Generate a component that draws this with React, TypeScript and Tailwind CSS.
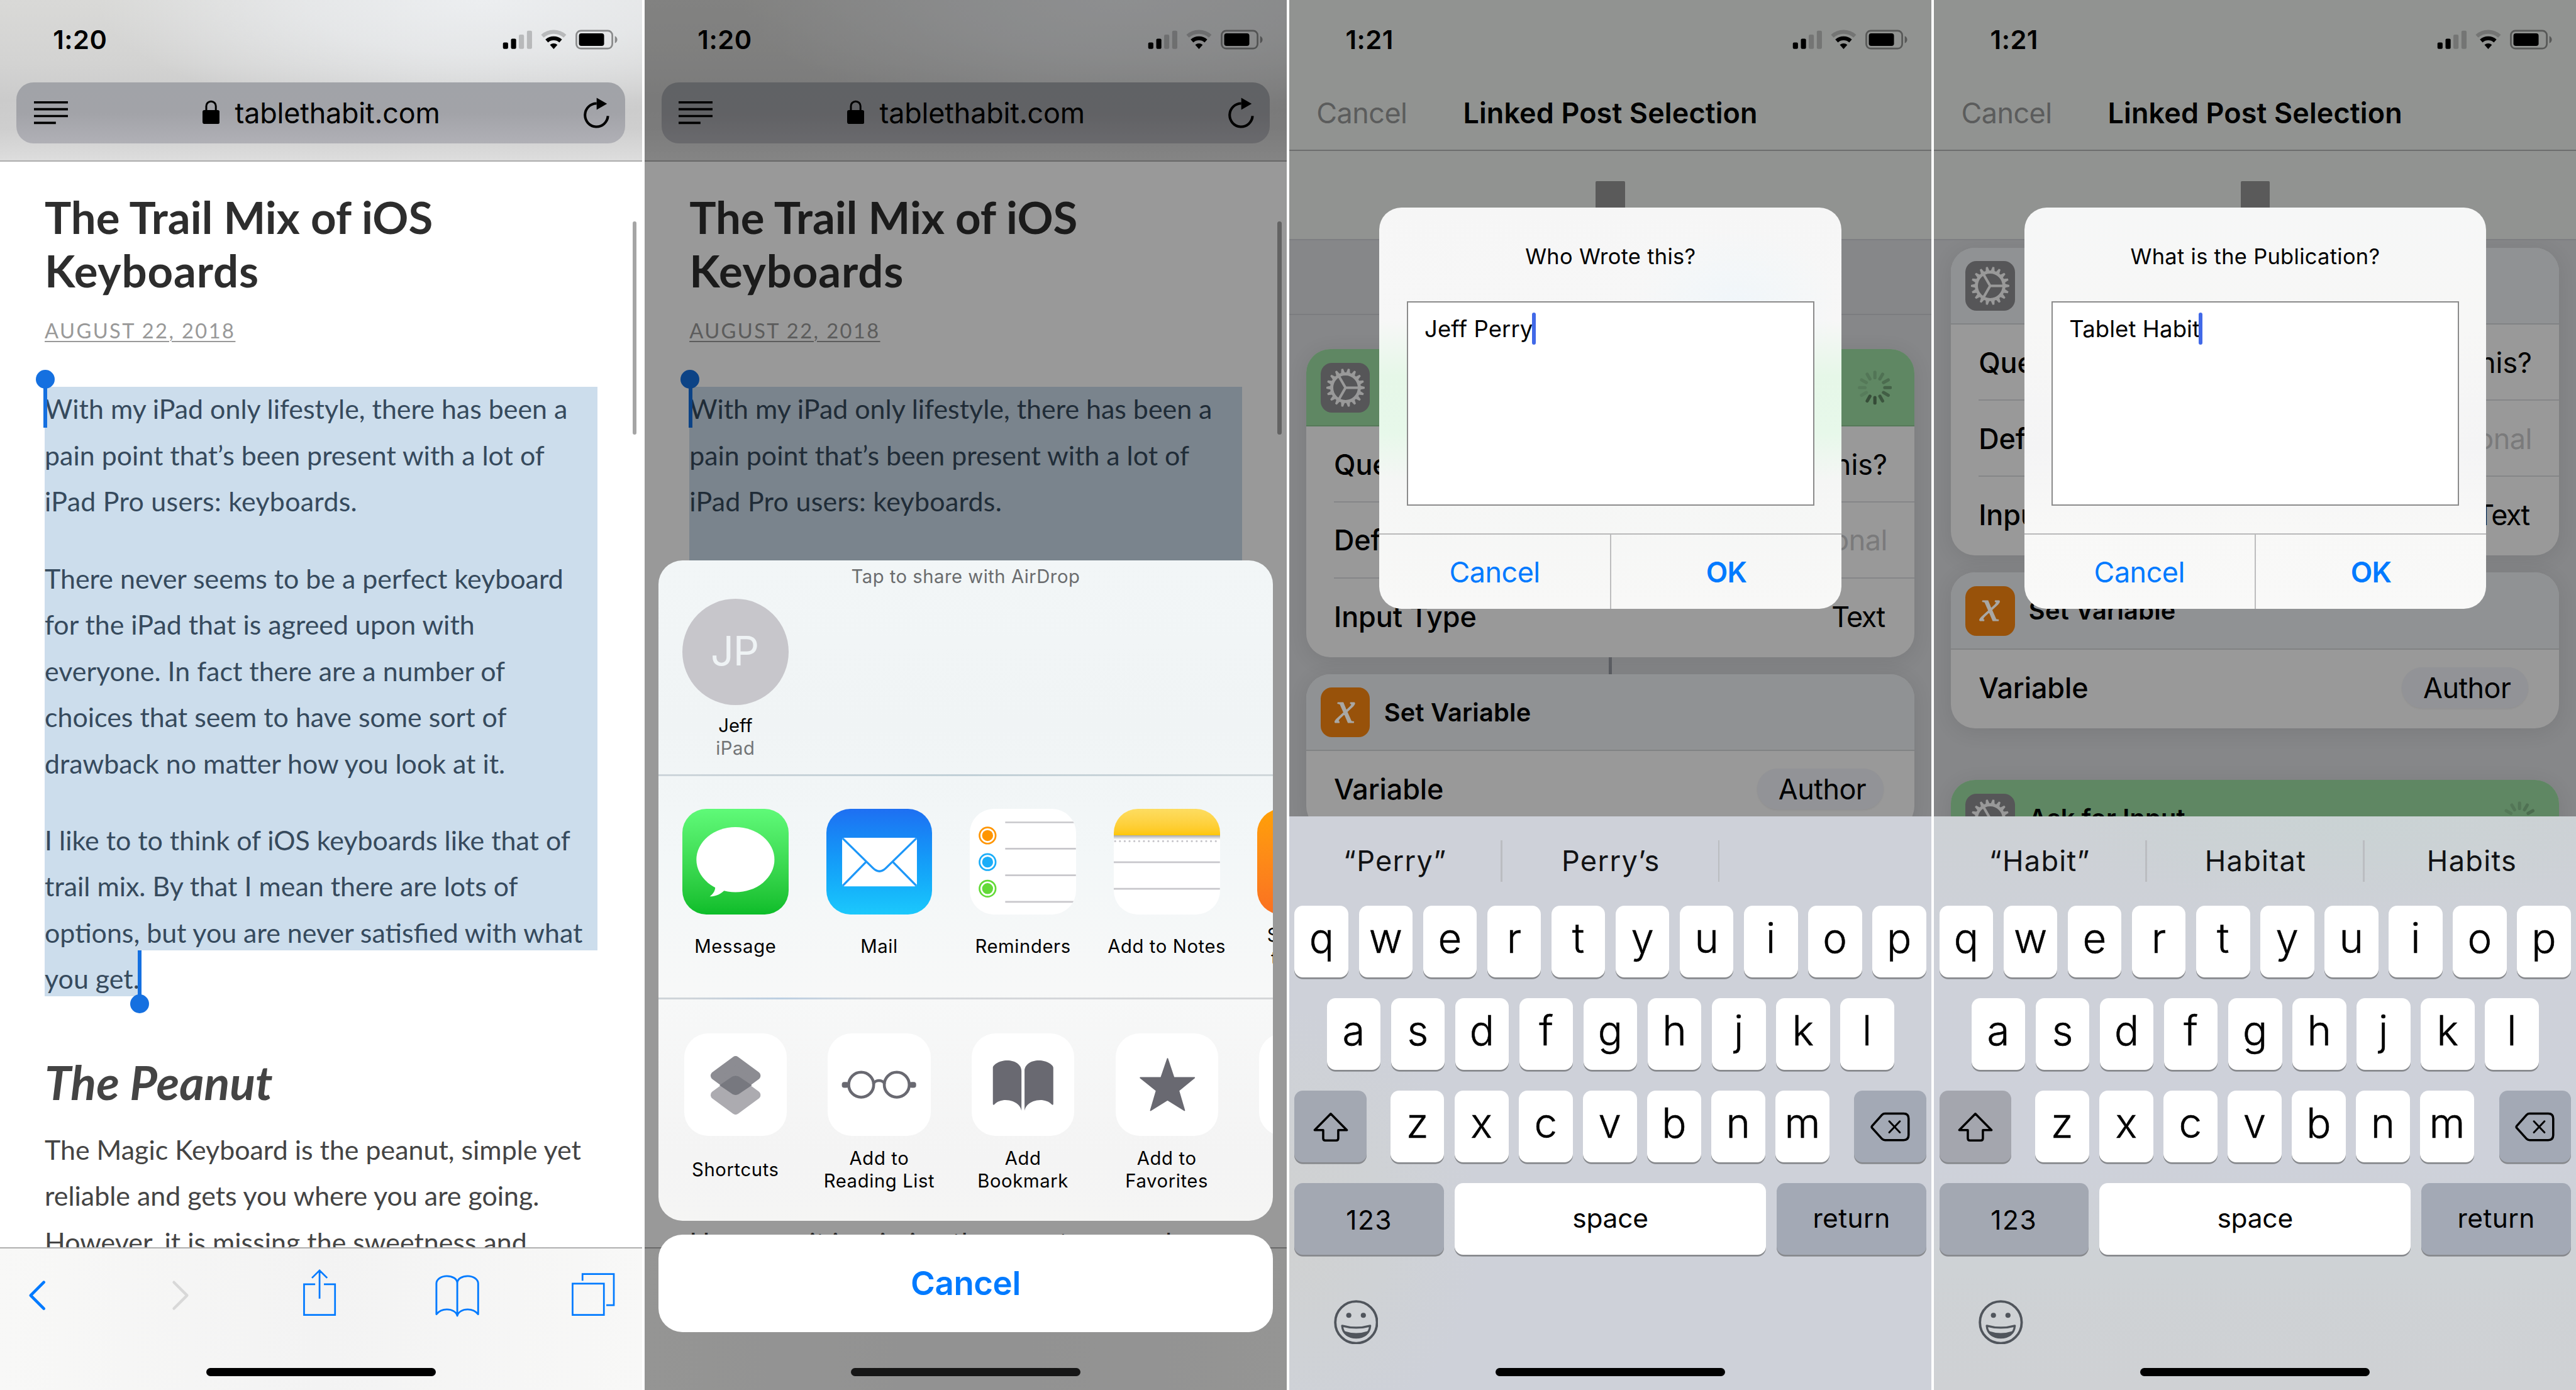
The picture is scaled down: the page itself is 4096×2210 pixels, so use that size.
import type { ReactNode } from "react";

/* Lengths are iOS points; the root zoom turns four 375pt screens into the full window width. */

const ARTICLE: string[][] = [
  [
    "With my iPad only lifestyle, there has been a",
    "pain point that’s been present with a lot of",
    "iPad Pro users: keyboards.",
  ],
  [
    "There never seems to be a perfect keyboard",
    "for the iPad that is agreed upon with",
    "everyone. In fact there are a number of",
    "choices that seem to have some sort of",
    "drawback no matter how you look at it.",
  ],
  [
    "I like to to think of iOS keyboards like that of",
    "trail mix. By that I mean there are lots of",
    "options, but you are never satisfied with what",
    "you get.",
  ],
];

const PEANUT = [
  "The Magic Keyboard is the peanut, simple yet",
  "reliable and gets you where you are going.",
  "However, it is missing the sweetness and",
];

function StatusBar({ time }: { time: string }) {
  return (
    <div className="flex h-11 shrink-0 items-start justify-between pt-[14px] text-black">
      <div className="w-[93.6px] text-center text-[15.3px] font-semibold leading-[18.4px] tracking-[0.012em]">{time}</div>
      <svg className="mr-[13px] mt-[2px] h-[14px] w-[69px]" viewBox="293 16 69 14" fill="none">
        <rect x="294" y="24.6" width="3" height="3.8" rx="0.8" fill="#000" />
        <rect x="298.7" y="22.4" width="3" height="6" rx="0.8" fill="#000" />
        <rect x="303.3" y="20" width="3" height="8.4" rx="0.8" fill="#000" fillOpacity="0.2" />
        <rect x="308" y="17.7" width="3" height="10.7" rx="0.8" fill="#000" fillOpacity="0.2" />
        <path d="M317.05 20.98A9.85 9.85 0 0 1 330.25 20.98" stroke="#000" strokeOpacity="0.2" strokeWidth="2.3" />
        <path d="M319.57 23.77A6.1 6.1 0 0 1 327.73 23.77" stroke="#000" strokeWidth="2.3" />
        <path d="M323.65 28.5L321.45 26Q323.65 24.4 325.85 26Z" fill="#000" />
        <rect x="336.9" y="17.8" width="21" height="10.4" rx="2.6" stroke="#000" strokeOpacity="0.4" strokeWidth="1" />
        <rect x="338.4" y="19.3" width="14.7" height="7.4" rx="1.4" fill="#000" />
        <path d="M359.4 20.9C361.3 21.7 361.3 24.3 359.4 25.1Z" fill="#000" fillOpacity="0.4" />
      </svg>
    </div>
  );
}

function HomeIndicator({ color }: { color: string }) {
  return <div className={`absolute bottom-2 left-[120.5px] h-[5px] w-[134px] rounded-full ${color}`} />;
}

function Phone({ children, className = "" }: { children: ReactNode; className?: string }) {
  return (
    <section className={`relative flex h-full w-[375px] shrink-0 flex-col overflow-hidden ${className}`}>{children}</section>
  );
}

/* ---------- Safari ---------- */

function AddressBar() {
  return (
    <div className="mx-[9.7px] mt-[4px] flex h-[35.8px] items-center justify-between rounded-[10px] bg-linear-to-b from-[#a1a3a8] via-[#a2a3a8] to-[#b0b0b6] pl-[10.1px] pr-[9.2px]">
      <svg className="h-[14px] w-[20px]" viewBox="0 0 20 14" stroke="#000" strokeWidth="1.35">
        <path d="M0 1H20M0 5H20M0 9H20M0 13H12.8" />
      </svg>
      <div className="flex items-center pr-[5.6px]">
        <svg className="mb-px h-[14px] w-[10px]" viewBox="0 0 10 14">
          <path d="M2.2 6V3.6A2.8 2.8 0 0 1 7.8 3.6V6" fill="none" stroke="#000" strokeWidth="1.1" />
          <rect x="0" y="5.9" width="10" height="8.1" rx="1.1" />
        </svg>
        <span className="ml-[9px] pt-[0.8px] text-[16.5px] leading-5 tracking-[-0.004em]">tablethabit.com</span>
      </div>
      <svg className="h-[18px] w-[15px]" viewBox="341.1 57 15 18">
        <path d="M355.3 67.8A6.7 6.8 0 1 1 348.7 60.5" fill="none" stroke="#000" strokeWidth="1.5" />
        <path d="M348.7 57.2L354.8 60.7L348.7 64.2Z" />
      </svg>
    </div>
  );
}

function Lines({ lines }: { lines: string[] }) {
  return (
    <p className="text-[15.77px] leading-[27px] whitespace-nowrap">
      {lines.map((line) => (
        <span key={line} className="block">
          {line}
        </span>
      ))}
    </p>
  );
}

function SafariPage() {
  return (
    <>
      <header className="h-[94.3px] shrink-0 border-b border-[#acacac] bg-[radial-gradient(60%_75%_at_75%_0%,#eceef0_0%,#e9ebedcc_45%,transparent_100%),linear-gradient(to_bottom,#d9d9d7_0%,#d3d3d2_40%,#cbcbcb_62%,#cecece_80%,#dddddd_100%)]">
        <StatusBar time="1:20" />
        <AddressBar />
      </header>
      <main className="relative flex-1 overflow-hidden bg-white pl-[26.1px] font-['Lato',sans-serif] text-[#444444]">
        <h1 className="mt-[17.1px] text-[26px] font-bold leading-[31px] text-[#2d2d2d]">
          The Trail Mix of iOS
          <br />
          <span className="tracking-[0.012em]">Keyboards</span>
        </h1>
        <div className="mt-[10.9px] text-[12px] leading-[18px] tracking-[0.074em] text-[#999999]">
          <span className="underline decoration-[0.9px] underline-offset-[1.6px]">AUGUST 22, 2018</span>
        </div>
        <div className="relative mt-[23px] flex flex-col gap-[18px] text-[#364a5d]">
          <div className="absolute left-0 top-[0.6px] h-[329.2px] w-[322.8px] bg-[#ccddec]" />
          <div className="absolute left-0 top-[329.7px] h-[27px] w-[54.6px] bg-[#ccddec]" />
          {ARTICLE.map((lines, i) => (
            <div key={lines[0]} className={i === 0 ? "relative [&_span:last-child]:tracking-[0.0065em]" : "relative"}>
              <Lines lines={lines} />
            </div>
          ))}
          <div className="absolute -left-[0.6px] top-[0.4px] h-[24.2px] w-[2.2px] bg-[#1570e0]" />
          <div className="absolute -left-[5.1px] -top-[9.3px] size-[11px] rounded-full bg-[#1570e0]" />
          <div className="absolute left-[54.5px] top-[329.8px] h-[28px] w-[2.2px] bg-[#1570e0]" />
          <div className="absolute left-[50.1px] top-[355.6px] size-[11px] rounded-full bg-[#1570e0]" />
        </div>
        <h2 className="mt-[29.7px] text-[27.7px] font-bold italic leading-[34px]">The Peanut</h2>
        <div className="mt-[9px]">
          <Lines lines={PEANUT} />
        </div>
        <div className="absolute right-[3px] top-[35px] h-[124.7px] w-[2.5px] rounded-full bg-[#a5a5a5]" />
      </main>
      <footer className="flex h-[83.4px] shrink-0 border-t border-[#b0b0b0] bg-linear-to-r from-[#f8f8f7] via-[#f3f3f3] to-[#f8f8f7] pt-[10.9px]">
        <svg className="ml-[7.6px] h-[30px] w-[28px]" viewBox="7.6 740 28 30" fill="none" stroke="#007aff" strokeWidth="1.7" strokeLinecap="round" strokeLinejoin="round">
          <path d="M25.5 748.7L17.8 756.4L25.5 764.1" />
        </svg>
        <svg className="ml-[56px] h-[30px] w-[28px]" viewBox="91.6 740 28 30" fill="none" stroke="#d8d8d8" strokeWidth="1.6" strokeLinecap="round" strokeLinejoin="round">
          <path d="M101.7 748.7L109.4 756.4L101.7 764.1" />
        </svg>
        <svg className="ml-[53.2px] h-[30px] w-[28px]" viewBox="172.85 740 28 30" fill="none" stroke="#007aff" strokeWidth="1">
          <path d="M184.3 749.9H177.8V767.8H195.9V749.9H189.4M186.85 742V758.3M182.4 746.2L186.85 741.8L191.3 746.2" />
        </svg>
        <svg className="ml-[52.2px] h-[30px] w-[28px]" viewBox="253 740 28 30" fill="none" stroke="#007aff" strokeWidth="1.05" strokeLinejoin="round">
          <path d="M267 749.2C267 746.6 264 745.1 260.9 745.1C257.7 745.1 254.8 747 254.8 749.4V767.4C256.3 765.6 258.5 764.6 260.9 764.6C264 764.6 266.4 766 267 768.3C267.6 766 270 764.6 273.1 764.6C275.5 764.6 277.7 765.6 279.2 767.4V749.4C279.2 747 276.3 745.1 273.1 745.1C270 745.1 267 746.6 267 749.2ZM267 749V768" />
        </svg>
        <svg className="ml-[51.5px] h-[30px] w-[28px]" viewBox="332.5 740 28 30" fill="none" stroke="#007aff" strokeWidth="1">
          <path d="M334.5 749.5H352.8V767.8H334.5ZM340.3 747.8V743.9H358.6V762.1H354.2" />
        </svg>
      </footer>
    </>
  );
}

/* ---------- Share sheet ---------- */

function SheetItem({ label, children }: { label: string; children: ReactNode }) {
  return (
    <div className="flex w-[84px] shrink-0 flex-col items-center">
      {children}
      <div className="mt-[5px] flex h-[27.6px] items-center text-center text-[10.75px] leading-[13.3px] tracking-[0.021em] whitespace-pre text-black">
        {label}
      </div>
    </div>
  );
}

function AppTile({ className, children }: { className: string; children?: ReactNode }) {
  return <div className={`size-[62px] overflow-hidden rounded-[14px] ${className}`}>{children}</div>;
}

function ActionTile({ children }: { children?: ReactNode }) {
  return (
    <div className="mb-[1.1px] size-[60px] overflow-hidden rounded-[14px] bg-white">
      <svg className="size-[60px]" viewBox="0 0 60 60">
        {children}
      </svg>
    </div>
  );
}

const REMINDERS = ["#ff9500", "#1badf8", "#63da38"];

function ShareSheet() {
  return (
    <div className="absolute inset-x-2 bottom-[34px] flex flex-col gap-2">
      <div className="flex h-[385.8px] flex-col overflow-hidden rounded-[14px] bg-[linear-gradient(to_bottom,#f2f6f7_0%,#f0f4f5_25%,#f3f7f8_45%,#f7f8f8_65%,#f4f4f4_90%,#f5f5f4_100%)]">
        <div className="flex h-[125.1px] shrink-0 flex-col">
          <div className="h-[19px] text-center text-[10.75px] leading-[19px] tracking-[0.017em] text-[#6a6c6e]">Tap to share with AirDrop</div>
          <div className="ml-[14px] mt-[3.5px] flex w-[62px] flex-col items-center text-[10.75px] leading-[13.2px]">
            <div className="mb-[5.6px] flex size-[62px] items-center justify-center rounded-full bg-[#c7c6cb] pb-px pr-[1px] text-[23.8px] tracking-[-0.02em] text-[#eff3f5]">
              JP
            </div>
            <div className="text-black">Jeff</div>
            <div className="tracking-[0.02em] text-[#727476]">iPad</div>
          </div>
        </div>
        <div className="h-[1.1px] shrink-0 bg-linear-to-r from-[#cdd5da] via-[#c1d0d7] to-[#d0d7da]" />
        <div className="flex h-[129.2px] shrink-0 pl-[3px] pt-[18.9px]">
          <SheetItem label="Message">
            <AppTile className="bg-linear-to-b from-[#5ffa78] to-[#0bbd29]">
              <svg viewBox="0 0 62 62" fill="#fff">
                <ellipse cx="31" cy="29.7" rx="22.8" ry="19" />
                <path d="M18.6 43.5C19.9 46.2 19 48.8 16 51.2C19.8 51.2 23 49.4 25.2 47Z" />
              </svg>
            </AppTile>
          </SheetItem>
          <SheetItem label="Mail">
            <AppTile className="bg-linear-to-b from-[#1e6ff2] to-[#1cc8fc]">
              <svg viewBox="0 0 62 62" fill="none" stroke="#1d97f8" strokeWidth="1.2">
                <rect x="9.2" y="16.9" width="43.7" height="28.4" rx="1.4" fill="#fff" stroke="none" />
                <path d="M9.6 17.3L27.2 34.6Q31 38.3 34.8 34.6L52.5 17.3M9.6 44.9L23 31.2M52.5 44.9L39 31.2" />
              </svg>
            </AppTile>
          </SheetItem>
          <SheetItem label="Reminders">
            <AppTile className="bg-white">
              <svg viewBox="0 0 62 62" fill="none">
                <path d="M20.7 7.9H62M20.7 23.3H62M20.7 38.8H62M20.7 54.3H62" stroke="#c8c7cc" />
                {REMINDERS.map((color, i) => (
                  <g key={color}>
                    <circle cx="10.4" cy={15.6 + i * 15.5} r="4.7" stroke={color} strokeWidth="1" />
                    <circle cx="10.4" cy={15.6 + i * 15.5} r="3.2" fill={color} />
                  </g>
                ))}
              </svg>
            </AppTile>
          </SheetItem>
          <SheetItem label="Add to Notes">
            <AppTile className="bg-white">
              <div className="h-[15.6px] bg-linear-to-b from-[#fddd60] to-[#fec702]" />
              <div className="h-[2.4px] bg-linear-to-b from-[#a9a9a9] to-white" />
              <svg className="h-[44px] w-[62px]" viewBox="0 18 62 44">
                <path d="M0.8 18.9H62" stroke="#c8c7cc" strokeWidth="1.2" strokeLinecap="round" strokeDasharray="0 2.8" />
                <path d="M0 31.2H62M0 46.7H62" stroke="#c8c7cc" />
              </svg>
            </AppTile>
          </SheetItem>
          <SheetItem label={"Save PDF\nto Books"}>
            <AppTile className="bg-linear-to-b from-[#ffa005] to-[#fa7021]" />
          </SheetItem>
        </div>
        <div className="h-[1.1px] shrink-0 bg-[linear-gradient(to_right,#cfd4d9_5%,#bccfe2_20%,#d4d7db_35%,#d4d6d8_100%)]" />
        <div className="flex flex-1 pl-[3px] pt-[19.9px]">
          <SheetItem label="Shortcuts">
            <ActionTile>
              <g strokeWidth="5" strokeLinejoin="round">
                <path d="M30 15.8L42.1 24.7L30 33.6L17.9 24.7Z" fill="#8c8c92" stroke="#8c8c92" />
                <path d="M30 27.1L42.1 36L30 44.9L17.9 36Z" fill="#acabb0" stroke="#acabb0" />
              </g>
              <path d="M20.6 30.3L28 25.3Q30 24 32 25.3L39.5 30.3L32 35.4Q30 36.7 28 35.4Z" fill="#77787f" />
            </ActionTile>
          </SheetItem>
          <SheetItem label={"Add to\nReading List"}>
            <ActionTile>
              <g fill="none" stroke="#696971" strokeWidth="1.7">
                <circle cx="19.6" cy="30" r="7.3" />
                <circle cx="40.4" cy="30" r="7.3" />
                <path d="M26.8 29.6C27.4 26.9 32.6 26.9 33.2 29.6" />
              </g>
              <rect x="8.3" y="28.4" width="4" height="3.4" rx="1.4" fill="#696971" />
              <rect x="47.7" y="28.4" width="4" height="3.4" rx="1.4" fill="#696971" />
            </ActionTile>
          </SheetItem>
          <SheetItem label={"Add\nBookmark"}>
            <ActionTile>
              <path
                d="M29.1 22C29.1 18.2 25.3 15.8 20.8 15.8C16 15.8 12.4 18.5 12.4 20V41.2C12.4 42 13 41.9 13.3 41.5C16 38.6 20.6 38.4 24 39.7C27.3 41 28.6 43 29.1 45.2ZM30.9 22C30.9 18.2 34.7 15.8 39.2 15.8C44 15.8 47.7 18.5 47.7 20V41.2C47.7 42 47.1 41.9 46.8 41.5C44 38.6 39.4 38.4 36 39.7C32.7 41 31.4 43 30.9 45.2Z"
                fill="#696971"
              />
            </ActionTile>
          </SheetItem>
          <SheetItem label={"Add to\nFavorites"}>
            <ActionTile>
              <path
                d="M30.3 14.8L34 25.9H46L36.8 33.4L40.2 45L30.3 38.8L20.4 45L23.8 33.4L14.4 25.9H26.5Z"
                fill="#696971"
                stroke="#696971"
                strokeWidth="0.7"
                strokeLinejoin="round"
              />
            </ActionTile>
          </SheetItem>
          <SheetItem label="">
            <ActionTile />
          </SheetItem>
        </div>
      </div>
      <div className="flex h-[57px] items-center justify-center rounded-[14px] bg-white pt-[0.6px] text-[19.4px] font-semibold tracking-[-0.008em] text-[#007aff]">
        Cancel
      </div>
    </div>
  );
}

/* ---------- Shortcuts editor ---------- */

const GEAR_TEETH = Array.from({ length: 18 }, (_, i) => i * 20);

function GearIcon() {
  return (
    <svg className="size-[29px] rounded-[6.5px] bg-[#565658]" viewBox="-14.5 -14.5 29 29" stroke="#999999">
      <circle r="8.05" fill="none" strokeWidth="1.8" />
      <path d="M0 0H7.5M0 0L-3.75 -6.5M0 0L-3.75 6.5" strokeWidth="1.5" />
      <g fill="#999999" stroke="none">
        {GEAR_TEETH.map((a) => (
          <path key={a} d="M8.6 -1.15L11.2 -0.55V0.55L8.6 1.15Z" transform={`rotate(${a})`} />
        ))}
      </g>
    </svg>
  );
}

function VariableIcon() {
  return (
    <div className="flex size-[29px] items-center justify-center rounded-[6.5px] bg-[#98520a] pb-[5.5px] font-['Liberation_Serif',serif] text-[26px] italic leading-none text-[#a9a8a5] [-webkit-text-stroke:0.35px_#a9a8a5]">
      x
    </div>
  );
}

/* Opacity of each blade, clockwise from the top. */
const BLADES = [0.13, 0.16, 0.2, 0.27, 0.3, 0.36, 0.44, 0.42, 0.08, 0.09, 0.1, 0.12];

function Spinner() {
  return (
    <svg className="ml-auto mr-[13.1px] size-[20px]" viewBox="-10 -10 20 20">
      {BLADES.map((o, i) => (
        <path key={i} d="M0 -5.8V-9" stroke="#000" strokeOpacity={o} strokeWidth="1.9" strokeLinecap="round" transform={`rotate(${i * 30})`} />
      ))}
    </svg>
  );
}

function Card({ icon, title, active = false, children }: { icon: ReactNode; title: string; active?: boolean; children?: ReactNode }) {
  return (
    <div className="mx-[9.9px] shrink-0 overflow-hidden rounded-[14px] bg-[#999999] shadow-[0_2px_12px_rgba(0,0,0,0.09)]">
      <div className={`flex h-[45.1px] items-center border-b border-black/10 pl-[8.2px] pt-[0.4px] ${active ? "bg-[#5f8763]" : "bg-[#909294]"}`}>
        {icon}
        <span className="ml-[8.2px] pt-[0.6px] text-[14.6px] font-semibold tracking-[0.006em] text-black">{title}</span>
        {active && <Spinner />}
      </div>
      {children}
    </div>
  );
}

function Row({ label, value, last = false }: { label: string; value: ReactNode; last?: boolean }) {
  return (
    <div
      className={`ml-[16.1px] flex items-center justify-between pr-[15.8px] text-[16.5px] text-black ${
        last ? "h-[46.1px] pb-[0.8px]" : "h-[44.35px] border-b border-[#858688] pt-[1.4px]"
      }`}
    >
      <span className="font-medium tracking-[-0.002em]">{label}</span>
      {value}
    </div>
  );
}

function AskCard({ active = false }: { active?: boolean }) {
  return (
    <Card icon={<GearIcon />} title="Ask for Input" active={active}>
      <Row label="Question" value={<span>Who Wrote this?</span>} />
      <Row label="Default Answer" value={<span className="tracking-[-0.01em] text-[#7a7a7b]">Optional</span>} />
      <Row label="Input Type" value={<span className="mr-[1.6px] tracking-[-0.035em]">Text</span>} last />
    </Card>
  );
}

function VariableCard() {
  return (
    <Card icon={<VariableIcon />} title="Set Variable">
      <Row
        label="Variable"
        last
        value={
          <span className="mr-[2.1px] -mt-px flex h-[23.8px] w-[73.8px] items-center justify-center rounded-full bg-[#929397] pl-[2px] pt-px tracking-[-0.012em] shadow-[0_0.5px_1px_rgba(0,0,0,0.06)]">
            Author
          </span>
        }
      />
    </Card>
  );
}

function EditorHeader() {
  return (
    <>
      <div className="h-[88.3px] shrink-0 border-b border-[#6c6d6e] bg-[#919391]">
        <StatusBar time="1:21" />
        <div className="relative flex h-[43.4px] items-center justify-center pt-[1.2px] text-[16.5px]">
          <span className="absolute left-[15.8px] tracking-[-0.011em] text-[#5b5c5c]">Cancel</span>
          <span className="font-semibold tracking-[0.003em] text-black">Linked Post Selection</span>
        </div>
      </div>
      <div className="flex h-[52.2px] shrink-0 justify-center border-b border-[#7d7e81] bg-[#919391] pt-[17.4px]">
        <div className="h-[26px] w-[17px] rounded-[0.7px] bg-[#5a5a5a]" />
      </div>
    </>
  );
}

function Dialog({ title, text, tint }: { title: string; text: string; tint: string }) {
  return (
    <div className={`absolute left-[52.6px] top-[121.4px] flex h-[234.3px] w-[270px] flex-col overflow-hidden rounded-[13px] text-black ${tint}`}>
      <div className="h-[54.5px] shrink-0 pt-[18.7px] text-center text-[12.65px] leading-5 tracking-[0.009em]">{title}</div>
      <div className="mx-[15.9px] flex h-[119.7px] shrink-0 items-start border border-[#8b8b8b] bg-white pl-[9.7px] pt-[6.1px] text-[13.4px]">
        <span className="pt-[0.4px] leading-[19px] tracking-[0.003em]">{text}</span>
        <span className="-ml-[0.6px] h-[18.7px] w-[2.1px] rounded-full bg-[#4169e8]" />
      </div>
      <div className="mt-auto flex h-[44px] border-t border-[#b9b9ba] text-[16.5px] text-[#007aff]">
        <div className="flex flex-1 items-center justify-center border-r border-[#bdbdbe] pt-[1.2px] tracking-[-0.011em]">Cancel</div>
        <div className="flex flex-1 items-center justify-center pt-[1.2px] font-semibold tracking-[-0.015em]">OK</div>
      </div>
    </div>
  );
}

/* ---------- Keyboard ---------- */

function Key({
  children,
  className = "w-[31.5px] bg-white pb-[4px] text-[24px] font-light [-webkit-text-stroke:0.2px_#000]",
}: {
  children: ReactNode;
  className?: string;
}) {
  return (
    <div className={`flex h-[42px] shrink-0 items-center justify-center rounded-[5px] shadow-[0_1px_0_#87898d] ${className}`}>
      {children}
    </div>
  );
}

function KeyRow({ keys }: { keys: string }) {
  return (
    <>
      {keys.split("").map((k) => (
        <Key key={k}>{k}</Key>
      ))}
    </>
  );
}

function Keyboard({ suggestions, tint, shiftTint }: { suggestions: string[]; tint: string; shiftTint: string }) {
  return (
    <div className={`relative flex h-[335px] shrink-0 flex-col text-black ${tint}`}>
      <div className="flex h-[52px] shrink-0 items-center text-[16.6px] tracking-[0.028em] text-[#111214]">
        <div className="w-[123.4px] text-center">{suggestions[0]}</div>
        <div className="h-[24.2px] w-px bg-[#bbbdc1]" />
        <div className="w-[126px] pl-[0.8px] text-center">{suggestions[1]}</div>
        <div className="h-[24.2px] w-px bg-[#bbbdc1]" />
        <div className="w-[123.6px] pl-[2px] text-center">{suggestions[2]}</div>
      </div>
      <div className="flex flex-col gap-3">
        <div className="flex justify-center gap-[6px]">
          <KeyRow keys="qwertyuiop" />
        </div>
        <div className="flex justify-center gap-[6px]">
          <KeyRow keys="asdfghjkl" />
        </div>
        <div className="flex justify-between px-[3px]">
          <Key className={`w-[42px] ${shiftTint}`}>
            <svg className="h-[18px] w-[22px]" viewBox="13.1 649 22 18" fill="none" stroke="#000" strokeWidth="1.3" strokeLinejoin="round">
              <path d="M24.1 650.4L33.5 659.9H28.5V664.8Q28.5 666 27.3 666H20.9Q19.7 666 19.7 664.8V659.9H14.7Z" />
            </svg>
          </Key>
          <div className="mr-[0.6px] flex gap-[6px]">
            <KeyRow keys="zxcvbnm" />
          </div>
          <Key className="w-[42px] bg-[#a3a9b5]">
            <svg className="h-[18px] w-[24px]" viewBox="339 649 24 18" fill="none" stroke="#000" strokeWidth="1.3" strokeLinecap="round" strokeLinejoin="round">
              <path d="M347.9 650.3H358.8Q361.7 650.3 361.7 653.2V662.9Q361.7 665.8 358.8 665.8H347.9Q346.9 665.8 346.2 665.1L340.4 658.7Q339.9 658.1 340.4 657.5L346.2 651Q346.9 650.3 347.9 650.3Z" />
              <path d="M350.4 654.8L356.6 661.3M356.6 654.8L350.4 661.3" strokeWidth="1.1" />
            </svg>
          </Key>
        </div>
        <div className="flex justify-between px-[3px] text-[15.6px]">
          <Key className="w-[87.2px] bg-[#a3a8b2] pt-[1px] tracking-[0.035em]">123</Key>
          <Key className="w-[182px] bg-white pb-[1px] tracking-[-0.005em]">space</Key>
          <Key className="w-[87.2px] bg-[#a3a9b5] pb-[1px] tracking-[0.01em]">return</Key>
        </div>
      </div>
      <svg className="ml-[25.9px] mt-[26.3px] size-[26px]" viewBox="26 759.3 26 26" fill="none" stroke="#50555c">
        <circle cx="39" cy="772.3" r="12.2" strokeWidth="1.4" />
        <circle cx="34.7" cy="768.2" r="1.5" fill="#50555c" stroke="none" />
        <circle cx="43.2" cy="768.2" r="1.5" fill="#50555c" stroke="none" />
        <path d="M30.8 774.3Q39 776.6 47.2 774.3C46.8 779 43.4 781.2 39 781.2C34.6 781.2 31.2 779 30.8 774.3Z" strokeWidth="1.2" strokeLinejoin="round" />
        <path d="M32 777.4Q39 779.8 46 777.4C44.8 780.3 42.2 781.4 39 781.4C35.8 781.4 33.2 780.3 32 777.4Z" fill="#50555c" stroke="none" />
      </svg>
      <HomeIndicator color="bg-black" />
    </div>
  );
}

export default function App() {
  return (
    <div className="flex h-[812.1px] w-[1505px] gap-[1.6667px] overflow-hidden bg-white font-['Inter',sans-serif] [zoom:2.721595]">
      <Phone>
        <SafariPage />
        <HomeIndicator color="bg-black" />
      </Phone>

      <Phone>
        <SafariPage />
        <div className="absolute inset-0 bg-black/40" />
        <HomeIndicator color="bg-[#161616]" />
        <ShareSheet />
      </Phone>

      <Phone className="bg-[#868789]">
        <EditorHeader />
        <div className="flex flex-1 flex-col overflow-hidden">
          <div className="h-[43.5px] shrink-0 border-b border-[#7b7c7f]" />
          <div className="mt-[20.1px] shrink-0">
            <AskCard active />
          </div>
          <div className="mx-auto h-[9.8px] w-[1.7px] shrink-0 bg-[#5c5e63]" />
          <VariableCard />
        </div>
        <Keyboard
          suggestions={["“Perry”", "Perry’s", ""]}
          tint="bg-[radial-gradient(30%_38%_at_0%_72%,#d0d1d1_0%,#cfd2d5_50%,transparent_100%),linear-gradient(#ced1d9,#ced1d9)]"
          shiftTint="bg-[#a3a8b2]"
        />
        <Dialog
          title="Who Wrote this?"
          text="Jeff Perry"
          tint="bg-[radial-gradient(22%_20%_at_77%_25%,#f0f6fa_0%,transparent_100%),linear-gradient(to_bottom,#f6f6f6_0%,#f7f7f7_28%,#e6f7e8_42%,#e7f8ea_56%,#f5f6f5_68%,#f8f8f7_100%)]"
        />
      </Phone>

      <Phone className="bg-[#868789]">
        <EditorHeader />
        <div className="flex flex-1 flex-col overflow-hidden pt-[4.1px]">
          <AskCard />
          <div className="h-[10px] shrink-0" />
          <VariableCard />
          <div className="h-[30px] shrink-0" />
          <Card icon={<GearIcon />} title="Ask for Input" active />
        </div>
        <Keyboard
          suggestions={["“Habit”", "Habitat", "Habits"]}
          tint="bg-[radial-gradient(45%_16%_at_65%_0%,#cad3d4_0%,transparent_100%),linear-gradient(to_bottom,#cdd1d5_0%,#ced1d9_26%,#ced1da_60%,#ced2d5_78%,#cfd1d4_100%)]"
          shiftTint="bg-[#a4a6ae]"
        />
        <Dialog
          title="What is the Publication?"
          text="Tablet Habit"
          tint="bg-[linear-gradient(to_bottom,#f6f7f7_0%,#f7f7f6_30%,#f4f4f5_60%,#f8f8f7_80%,#f9f9f8_100%)]"
        />
      </Phone>
    </div>
  );
}
